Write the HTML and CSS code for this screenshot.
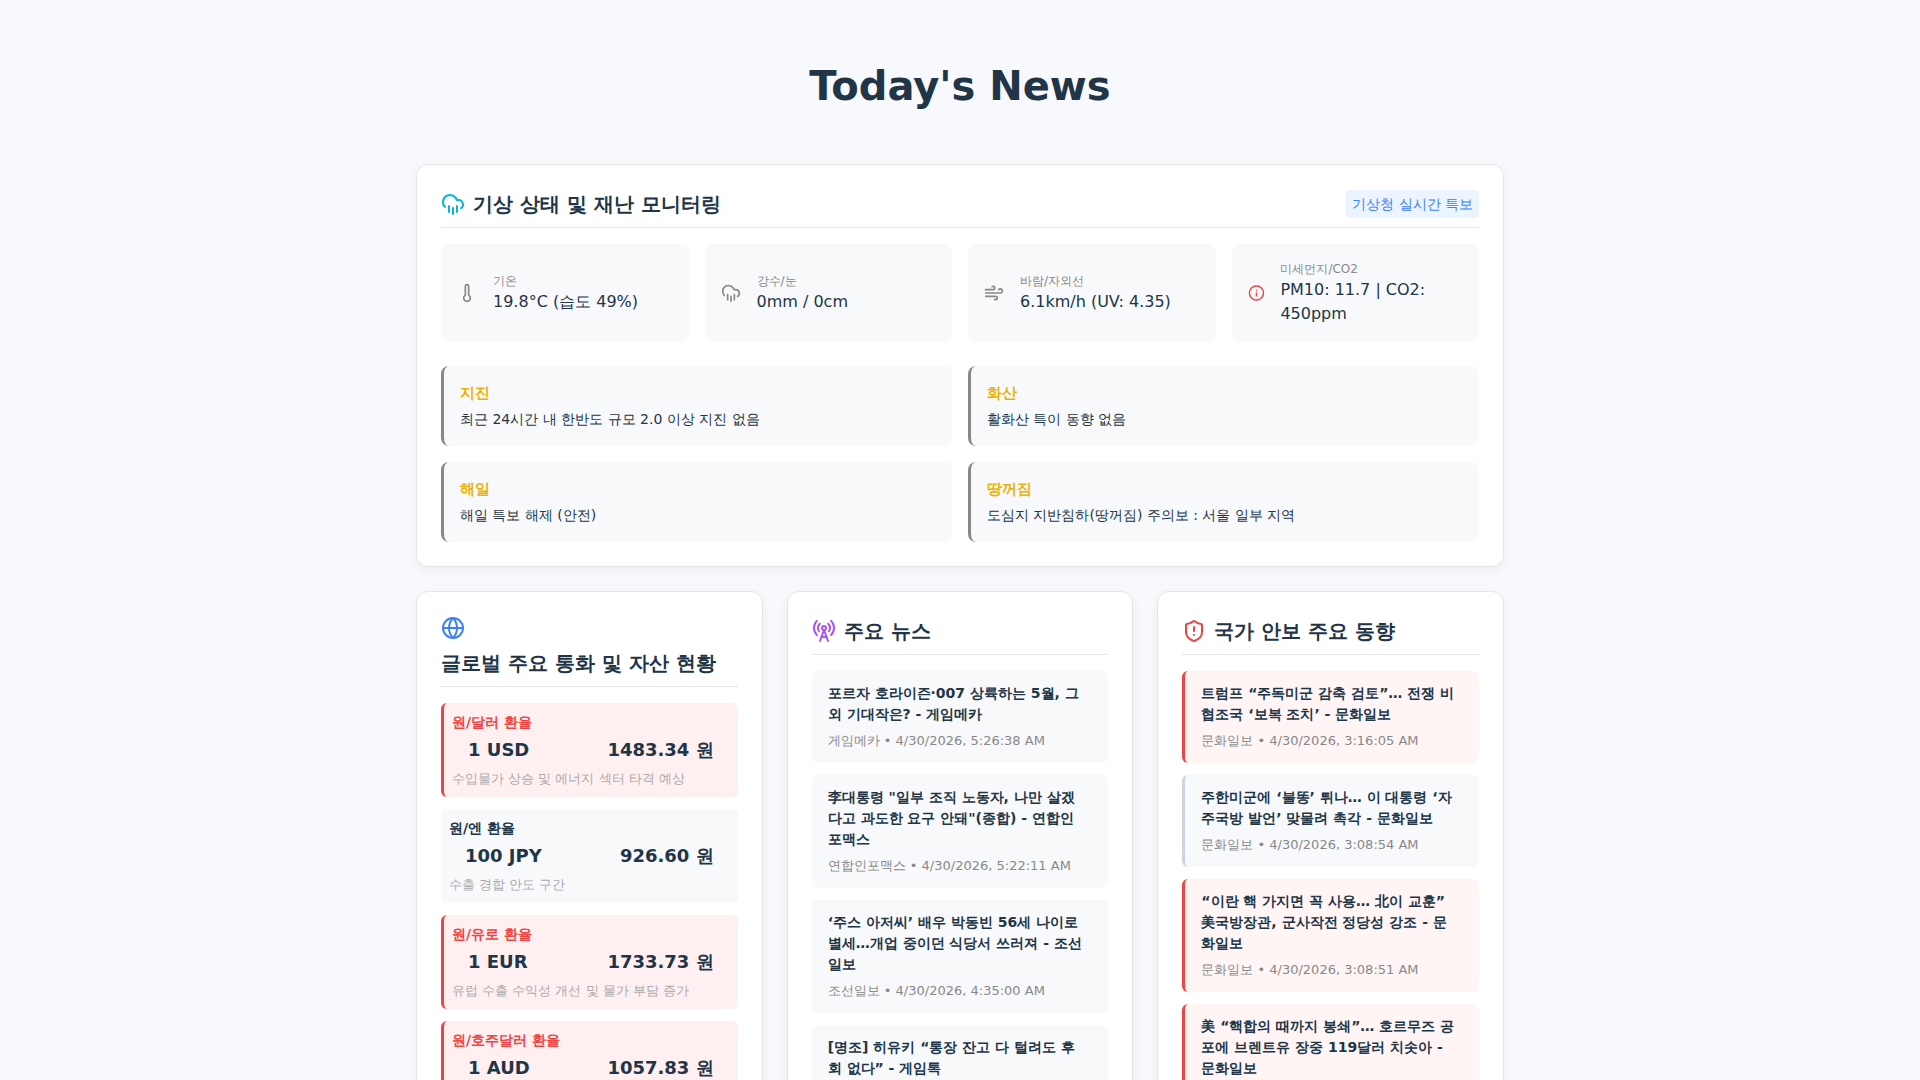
FILE: index.html
```html
<!DOCTYPE html>
<html lang="en">
<head>
    <meta charset="UTF-8">
    <meta name="viewport" content="width=device-width, initial-scale=1.0">
    <title>Today's News</title>
    <link rel="stylesheet" href="styles.css">
</head>
<body>
    <div class="container">
        <h1>Today's News</h1>

        <section class="card weather">
            <div class="card-header">
                <h2>
                    <svg class="icon cyan" viewBox="0 0 24 24"><path d="M4 14.899A7 7 0 1 1 15.71 8h1.79a4.5 4.5 0 0 1 2.5 8.242"/><path d="M16 14v6"/><path d="M8 14v6"/><path d="M12 16v6"/></svg>
                    기상 상태 및 재난 모니터링
                </h2>
                <span class="badge">기상청 실시간 특보</span>
            </div>

            <div class="metrics">
                <div class="metric">
                    <svg class="icon small" viewBox="0 0 24 24"><path d="M14 4v10.54a4 4 0 1 1-4 0V4a2 2 0 0 1 4 0Z"/></svg>
                    <div>
                        <div class="label">기온</div>
                        <div class="value">19.8°C (습도 49%)</div>
                    </div>
                </div>
                <div class="metric">
                    <svg class="icon small" viewBox="0 0 24 24"><path d="M4 14.899A7 7 0 1 1 15.71 8h1.79a4.5 4.5 0 0 1 2.5 8.242"/><path d="M16 14v6"/><path d="M8 14v6"/><path d="M12 16v6"/></svg>
                    <div>
                        <div class="label">강수/눈</div>
                        <div class="value">0mm / 0cm</div>
                    </div>
                </div>
                <div class="metric">
                    <svg class="icon small" viewBox="0 0 24 24"><path d="M12.8 19.6A2 2 0 1 0 14 16H2"/><path d="M17.5 8a2.5 2.5 0 1 1 2 4H2"/><path d="M9.8 4.4A2 2 0 1 1 11 8H2"/></svg>
                    <div>
                        <div class="label">바람/자외선</div>
                        <div class="value">6.1km/h (UV: 4.35)</div>
                    </div>
                </div>
                <div class="metric">
                    <svg class="icon small red" viewBox="0 0 24 24"><circle cx="12" cy="12" r="10"/><path d="M12 16v-4"/><path d="M12 8h.01"/></svg>
                    <div>
                        <div class="label">미세먼지/CO2</div>
                        <div class="value">PM10: 11.7 | CO2: 450ppm</div>
                    </div>
                </div>
            </div>

            <div class="alerts">
                <div class="alert">
                    <h3>지진</h3>
                    <p>최근 24시간 내 한반도 규모 2.0 이상 지진 없음</p>
                </div>
                <div class="alert">
                    <h3>화산</h3>
                    <p>활화산 특이 동향 없음</p>
                </div>
                <div class="alert">
                    <h3>해일</h3>
                    <p>해일 특보 해제 (안전)</p>
                </div>
                <div class="alert">
                    <h3>땅꺼짐</h3>
                    <p>도심지 지반침하(땅꺼짐) 주의보 : 서울 일부 지역</p>
                </div>
            </div>
        </section>

        <div class="columns">
            <section class="card">
                <div class="card-header">
                    <h2>
                        <svg class="icon blue" viewBox="0 0 24 24"><circle cx="12" cy="12" r="10"/><path d="M12 2a14.5 14.5 0 0 0 0 20 14.5 14.5 0 0 0 0-20"/><path d="M2 12h20"/></svg>
                        글로벌 주요 통화 및 자산 현황
                    </h2>
                </div>
                <ul class="list">
                    <li class="rate danger">
                        <h3>원/달러 환율</h3>
                        <div class="rate-row"><span>1 USD</span><span>1483.34 원</span></div>
                        <p>수입물가 상승 및 에너지 섹터 타격 예상</p>
                    </li>
                    <li class="rate">
                        <h3>원/엔 환율</h3>
                        <div class="rate-row"><span>100 JPY</span><span>926.60 원</span></div>
                        <p>수출 경합 안도 구간</p>
                    </li>
                    <li class="rate danger">
                        <h3>원/유로 환율</h3>
                        <div class="rate-row"><span>1 EUR</span><span>1733.73 원</span></div>
                        <p>유럽 수출 수익성 개선 및 물가 부담 증가</p>
                    </li>
                    <li class="rate danger">
                        <h3>원/호주달러 환율</h3>
                        <div class="rate-row"><span>1 AUD</span><span>1057.83 원</span></div>
                        <p>원자재 수입 단가 상승</p>
                    </li>
                </ul>
            </section>

            <section class="card">
                <div class="card-header">
                    <h2>
                        <svg class="icon purple" viewBox="0 0 24 24"><path d="M4.9 16.1C1 12.2 1 5.8 4.9 1.9"/><path d="M7.8 4.7a6.14 6.14 0 0 0-.8 7.5"/><circle cx="12" cy="9" r="2"/><path d="M16.2 4.8c2 2 2.26 5.11.8 7.47"/><path d="M19.1 1.9a9.96 9.96 0 0 1 0 14.1"/><path d="M9.5 18h5"/><path d="m8 22 4-11 4 11"/></svg>
                        주요 뉴스
                    </h2>
                </div>
                <ul class="list">
                    <li class="news">
                        <a href="#">포르자 호라이즌·007 상륙하는 5월, 그 외 기대작은? - 게임메카</a>
                        <p>게임메카 • 4/30/2026, 5:26:38 AM</p>
                    </li>
                    <li class="news">
                        <a href="#">李대통령 "일부 조직 노동자, 나만 살겠다고 과도한 요구 안돼"(종합) - 연합인포맥스</a>
                        <p>연합인포맥스 • 4/30/2026, 5:22:11 AM</p>
                    </li>
                    <li class="news">
                        <a href="#">‘주스 아저씨’ 배우 박동빈 56세 나이로 별세…개업 중이던 식당서 쓰러져 - 조선일보</a>
                        <p>조선일보 • 4/30/2026, 4:35:00 AM</p>
                    </li>
                    <li class="news">
                        <a href="#">[명조] 히유키 “통장 잔고 다 털려도 후회 없다” - 게임톡</a>
                        <p>게임톡 • 4/30/2026, 4:20:00 AM</p>
                    </li>
                </ul>
            </section>

            <section class="card">
                <div class="card-header">
                    <h2>
                        <svg class="icon red" viewBox="0 0 24 24"><path d="M20 13c0 5-3.5 7.5-7.66 8.95a1 1 0 0 1-.67-.01C7.5 20.5 4 18 4 13V6a1 1 0 0 1 1-1c2 0 4.5-1.2 6.24-2.72a1.17 1.17 0 0 1 1.52 0C14.51 3.81 17 5 19 5a1 1 0 0 1 1 1z"/><path d="M12 8v4"/><path d="M12 16h.01"/></svg>
                        국가 안보 주요 동향
                    </h2>
                </div>
                <ul class="list">
                    <li class="news security danger">
                        <a href="#">트럼프 “주독미군 감축 검토”… 전쟁 비협조국 ‘보복 조치’ - 문화일보</a>
                        <p>문화일보 • 4/30/2026, 3:16:05 AM</p>
                    </li>
                    <li class="news security">
                        <a href="#">주한미군에 ‘불똥’ 튀나… 이 대통령 ‘자주국방 발언’ 맞물려 촉각 - 문화일보</a>
                        <p>문화일보 • 4/30/2026, 3:08:54 AM</p>
                    </li>
                    <li class="news security danger">
                        <a href="#">“이란 핵 가지면 꼭 사용… 北이 교훈” 美국방장관, 군사작전 정당성 강조 - 문화일보</a>
                        <p>문화일보 • 4/30/2026, 3:08:51 AM</p>
                    </li>
                    <li class="news security danger">
                        <a href="#">美 “핵합의 때까지 봉쇄”… 호르무즈 공포에 브렌트유 장중 119달러 치솟아 - 문화일보</a>
                        <p>문화일보 • 4/30/2026, 3:05:12 AM</p>
                    </li>
                </ul>
            </section>
        </div>
    </div>
</body>
</html>
```
FILE: styles.css
```css
* {
    box-sizing: border-box;
}

body {
    margin: 0;
    font-family: "DejaVu Sans", sans-serif;
    font-size: 16px;
    line-height: 1.5;
    color: #213547;
    background: #f8f9fd;
}

h1, h2, h3, p, ul {
    margin: 0;
    padding: 0;
}

.container {
    max-width: 1152px;
    margin: 0 auto;
    padding: 56px 32px 32px;
}

h1 {
    font-size: 40px;
    text-align: center;
    margin-bottom: 48px;
}

.card {
    background: #fff;
    border: 1px solid #e5e5e5;
    border-radius: 12px;
    padding: 24px;
    box-shadow: 0 4px 12px rgba(0, 0, 0, 0.05);
}

.card-header {
    display: flex;
    justify-content: space-between;
    align-items: center;
    padding-bottom: 8px;
    margin-bottom: 16px;
    border-bottom: 1px solid #e5e5e5;
}

.card-header h2 {
    display: flex;
    flex-wrap: wrap;
    align-items: center;
    gap: 8px;
    font-size: 20px;
    font-weight: 600;
}

.badge {
    padding: 4px 6px;
    font-size: 14px;
    line-height: 20px;
    color: #3b82f6;
    background: #ecf4ff;
    border-radius: 4px;
}

/* icons */
.icon {
    width: 24px;
    height: 24px;
    fill: none;
    stroke: currentColor;
    stroke-width: 2;
    stroke-linecap: round;
    stroke-linejoin: round;
    color: #888;
}

.icon.small {
    width: 20px;
    height: 20px;
}

.icon.cyan { color: #06b6d4; }
.icon.blue { color: #3b82f6; }
.icon.purple { color: #a855f7; }
.icon.red { color: #ef4444; }

/* weather */
.weather {
    margin-bottom: 24px;
}

.metrics {
    display: grid;
    grid-template-columns: repeat(4, 1fr);
    gap: 16px;
    margin-bottom: 24px;
}

.metric {
    display: flex;
    align-items: center;
    gap: 16px;
    padding: 16px;
    background: #f8f9fb;
    border-radius: 8px;
}

.label {
    font-size: 12px;
    color: #888;
}

.value {
    font-weight: 500;
}

.alerts {
    display: grid;
    grid-template-columns: repeat(2, 1fr);
    gap: 16px;
}

.alert {
    padding: 16px;
    background: #f8f9fb;
    border-left: 3px solid #888;
    border-radius: 8px;
}

.alert h3 {
    font-size: 15px;
    line-height: 22px;
    color: #eab308;
    margin-bottom: 4px;
}

.alert p {
    font-size: 14px;
    line-height: 22px;
}

/* lower columns */
.columns {
    display: grid;
    grid-template-columns: repeat(3, 1fr);
    gap: 24px;
}

.list {
    list-style: none;
    display: flex;
    flex-direction: column;
    gap: 12px;
}

.rate {
    padding: 8px;
    background: #f8f9fb;
    border-radius: 6px;
}

.rate.danger {
    background: #feeff0;
    border-left: 3px solid #ef4444;
}

.rate h3 {
    font-size: 14px;
    line-height: 22px;
}

.rate.danger h3 {
    color: #ef4444;
}

.rate-row {
    display: flex;
    justify-content: space-between;
    padding: 3px 16px 6px;
    font-size: 18px;
    line-height: 27px;
    font-weight: 700;
}

.rate p {
    font-size: 13px;
    line-height: 20px;
    color: #aaa;
}

.news {
    padding: 12px 24px 12px 16px;
    background: #f8f9fb;
    border-radius: 6px;
}

.news a {
    display: block;
    margin-bottom: 6px;
    font-size: 14px;
    line-height: 21px;
    font-weight: 600;
    color: inherit;
    text-decoration: none;
}

.news p {
    font-size: 13px;
    line-height: 20px;
    color: #888;
}

.security {
    border-left: 3px solid #cbd5e1;
}

.security.danger {
    background: #fff5f5;
    border-left-color: #ef4444;
}
```
